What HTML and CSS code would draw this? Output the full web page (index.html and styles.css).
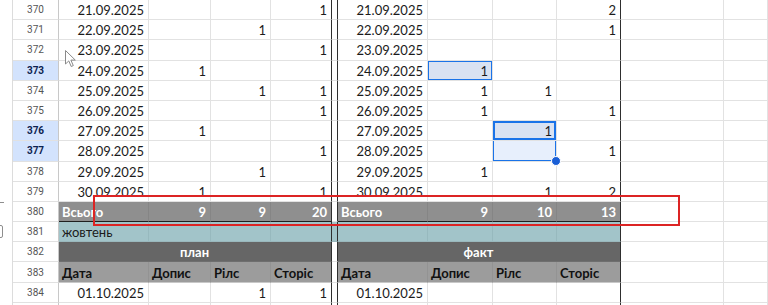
FILE: index.html
```html
<!DOCTYPE html>
<html lang="uk">
<head>
<meta charset="utf-8">
<title>Sheet</title>
<link rel="stylesheet" href="styles.css">
</head>
<body>
<div class="sheet">
  <div class="row">
    <div class="strip"></div><div class="rh">370</div>
    <div class="c wa">21.09.2025</div><div class="c wb"></div><div class="c wc"></div><div class="c wd dk">1</div>
    <div class="gap"></div>
    <div class="c we">21.09.2025</div><div class="c wf"></div><div class="c wg"></div><div class="c wh dk">2</div>
    <div class="c wi"></div><div class="c wj"></div>
  </div>
  <div class="row">
    <div class="strip"></div><div class="rh">371</div>
    <div class="c wa">22.09.2025</div><div class="c wb"></div><div class="c wc">1</div><div class="c wd dk"></div>
    <div class="gap"></div>
    <div class="c we">22.09.2025</div><div class="c wf"></div><div class="c wg"></div><div class="c wh dk">1</div>
    <div class="c wi"></div><div class="c wj"></div>
  </div>
  <div class="row">
    <div class="strip"></div><div class="rh">372</div>
    <div class="c wa">23.09.2025</div><div class="c wb"></div><div class="c wc"></div><div class="c wd dk">1</div>
    <div class="gap"></div>
    <div class="c we">23.09.2025</div><div class="c wf"></div><div class="c wg"></div><div class="c wh dk"></div>
    <div class="c wi"></div><div class="c wj"></div>
  </div>
  <div class="row">
    <div class="strip"></div><div class="rh on">373</div>
    <div class="c wa">24.09.2025</div><div class="c wb">1</div><div class="c wc"></div><div class="c wd dk"></div>
    <div class="gap"></div>
    <div class="c we">24.09.2025</div><div class="c wf sel">1</div><div class="c wg"></div><div class="c wh dk"></div>
    <div class="c wi"></div><div class="c wj"></div>
  </div>
  <div class="row">
    <div class="strip"></div><div class="rh">374</div>
    <div class="c wa">25.09.2025</div><div class="c wb"></div><div class="c wc">1</div><div class="c wd dk">1</div>
    <div class="gap"></div>
    <div class="c we">25.09.2025</div><div class="c wf">1</div><div class="c wg">1</div><div class="c wh dk"></div>
    <div class="c wi"></div><div class="c wj"></div>
  </div>
  <div class="row">
    <div class="strip"></div><div class="rh">375</div>
    <div class="c wa">26.09.2025</div><div class="c wb"></div><div class="c wc"></div><div class="c wd dk">1</div>
    <div class="gap"></div>
    <div class="c we">26.09.2025</div><div class="c wf">1</div><div class="c wg"></div><div class="c wh dk">1</div>
    <div class="c wi"></div><div class="c wj"></div>
  </div>
  <div class="row">
    <div class="strip"></div><div class="rh on">376</div>
    <div class="c wa">27.09.2025</div><div class="c wb">1</div><div class="c wc"></div><div class="c wd dk"></div>
    <div class="gap"></div>
    <div class="c we">27.09.2025</div><div class="c wf"></div><div class="c wg active">1</div><div class="c wh dk"></div>
    <div class="c wi"></div><div class="c wj"></div>
  </div>
  <div class="row">
    <div class="strip"></div><div class="rh on">377</div>
    <div class="c wa">28.09.2025</div><div class="c wb"></div><div class="c wc"></div><div class="c wd dk">1</div>
    <div class="gap"></div>
    <div class="c we">28.09.2025</div><div class="c wf"></div><div class="c wg range"></div><div class="c wh dk">1</div>
    <div class="c wi"></div><div class="c wj"></div>
  </div>
  <div class="row">
    <div class="strip"></div><div class="rh">378</div>
    <div class="c wa">29.09.2025</div><div class="c wb"></div><div class="c wc">1</div><div class="c wd dk"></div>
    <div class="gap"></div>
    <div class="c we">29.09.2025</div><div class="c wf">1</div><div class="c wg"></div><div class="c wh dk"></div>
    <div class="c wi"></div><div class="c wj"></div>
  </div>
  <div class="row">
    <div class="strip"></div><div class="rh">379</div>
    <div class="c wa">30.09.2025</div><div class="c wb">1</div><div class="c wc"></div><div class="c wd dk">1</div>
    <div class="gap"></div>
    <div class="c we">30.09.2025</div><div class="c wf"></div><div class="c wg">1</div><div class="c wh dk">2</div>
    <div class="c wi"></div><div class="c wj"></div>
  </div>
  <div class="row">
    <div class="strip"><div class="dash"></div></div><div class="rh">380</div>
    <div class="c wa tot left">Всього</div><div class="c wb tot">9</div><div class="c wc tot">9</div><div class="c wd tot dk">20</div>
    <div class="gap"></div>
    <div class="c we tot left">Всього</div><div class="c wf tot">9</div><div class="c wg tot">10</div><div class="c wh tot dk">13</div>
    <div class="c wi"></div><div class="c wj"></div>
  </div>
  <div class="row">
    <div class="strip"><div class="grp"></div></div><div class="rh">381</div>
    <div class="c wa teal left">жовтень</div><div class="c wb teal"></div><div class="c wc teal"></div><div class="c wd teal dk"></div>
    <div class="gap teal"></div>
    <div class="c we teal"></div><div class="c wf teal"></div><div class="c wg teal"></div><div class="c wh teal dk"></div>
    <div class="c wi"></div><div class="c wj"></div>
  </div>
  <div class="row">
    <div class="strip"></div><div class="rh">382</div>
    <div class="c wleft title dk">план</div>
    <div class="gap"></div>
    <div class="c wright title dk">факт</div>
    <div class="c wi"></div><div class="c wj"></div>
  </div>
  <div class="row">
    <div class="strip"></div><div class="rh">383</div>
    <div class="c wa head">Дата</div><div class="c wb head">Допис</div><div class="c wc head">Рілс</div><div class="c wd head dk">Сторіс</div>
    <div class="gap"></div>
    <div class="c we head">Дата</div><div class="c wf head">Допис</div><div class="c wg head">Рілс</div><div class="c wh head dk">Сторіс</div>
    <div class="c wi"></div><div class="c wj"></div>
  </div>
  <div class="row">
    <div class="strip"></div><div class="rh">384</div>
    <div class="c wa">01.10.2025</div><div class="c wb"></div><div class="c wc">1</div><div class="c wd dk">1</div>
    <div class="gap"></div>
    <div class="c we">01.10.2025</div><div class="c wf"></div><div class="c wg"></div><div class="c wh dk"></div>
    <div class="c wi"></div><div class="c wj"></div>
  </div>
  <div class="row">
    <div class="strip"></div><div class="rh"></div>
    <div class="c wa"></div><div class="c wb"></div><div class="c wc"></div><div class="c wd dk"></div>
    <div class="gap"></div>
    <div class="c we"></div><div class="c wf"></div><div class="c wg"></div><div class="c wh dk"></div>
    <div class="c wi"></div><div class="c wj"></div>
  </div>
</div>
<div class="mark"></div>
<svg class="cursor" width="12" height="18" viewBox="0 0 12 18"><path d="M0.5 0.5 L0.5 14 L3.8 10.9 L6.2 16.5 L8.3 15.6 L5.9 10.1 L10.3 10.1 Z" fill="#ffffff" stroke="#8a8a8a" stroke-width="1" stroke-linejoin="round"/></svg>
</body>
</html>
```
FILE: styles.css
```css
html, body {
  margin: 0;
  padding: 0;
  background: #ffffff;
  overflow: hidden;
}
body {
  width: 768px;
  height: 305px;
  position: relative;
  font-family: Lato, "Open Sans", sans-serif;
  font-size: 13px;
  color: #1b1b1b;
}
.sheet {
  display: flex;
  flex-direction: column;
}
.row {
  display: flex;
  height: 20.2px;
  flex: none;
}
.strip {
  width: 13px;
  flex: none;
  border-right: 1px solid #dcdcdc;
  box-sizing: border-box;
  display: flex;
  flex-direction: column;
  overflow: visible;
}
.dash {
  width: 4px;
  height: 1px;
  background: #8e8e8e;
  margin-top: 0;
}
.grp {
  width: 11px;
  height: 13px;
  margin-left: -8px;
  margin-top: 3px;
  border: 1px solid #8e8e8e;
  border-radius: 2px;
  box-sizing: border-box;
}
.rh {
  width: 46px;
  flex: none;
  box-sizing: border-box;
  border-right: 1px solid #c8c8c8;
  border-bottom: 1px solid #e1e1e1;
  display: flex;
  align-items: center;
  justify-content: center;
  font-family: Roboto, "Liberation Sans", sans-serif;
  font-size: 10px;
  color: #555555;
}
.rh.on {
  background: #d3e3fd;
  color: #0b2250;
  font-weight: bold;
}
.c {
  flex: none;
  box-sizing: border-box;
  border-right: 1px solid #e2e2e2;
  border-bottom: 1px solid #e2e2e2;
  display: flex;
  align-items: center;
  justify-content: flex-end;
  padding: 1px 4px 0 3px;
  white-space: nowrap;
  overflow: hidden;
  position: relative;
}
.wa, .we { width: 90px; }
.wb { width: 62px; }
.wc { width: 60px; }
.wd { width: 61px; }
.wf { width: 65px; }
.wg, .wh { width: 64px; }
.wi { width: 103px; }
.wj { flex: 1; }
.wleft { width: 273px; }
.wright { width: 283px; }
.gap {
  width: 6px;
  flex: none;
  box-sizing: border-box;
  border-right: 1px solid #2e2e2e;
  border-bottom: 1px solid #e2e2e2;
}
.c.dk { border-right-color: #2e2e2e; }
.left { justify-content: flex-start; }
.tot {
  background: #8f8f8f;
  color: #ffffff;
  font-weight: bold;
  border-right-color: #858585;
  border-bottom-color: #1f1f1f;
}
.teal {
  background: #a2c4c9;
  border-right-color: #97b9be;
  border-bottom-color: #9ab8bd;
}
.gap.teal { border-right-color: #2e2e2e; }
.title {
  background: #666666;
  color: #ffffff;
  font-weight: bold;
  justify-content: center;
  border-bottom-color: #6f6f6f;
}
.head {
  background: #9c9c9c;
  color: #111111;
  font-weight: bold;
  justify-content: flex-start;
  border-right-color: #939393;
  border-bottom-color: #c8c8c8;
}
.sel {
  background: #d9e2f2;
  box-shadow: inset 0 0 0 1px #1a73e8;
}
.active {
  background: #d9e2f2;
  box-shadow: inset 0 0 0 2px #1a73e8;
}
.range {
  background: #e7effc;
  overflow: visible;
  box-shadow: inset 1px 0 0 #1a73e8, inset -1px 0 0 #1a73e8, inset 0 -1px 0 #1a73e8;
}
.range::after {
  content: "";
  position: absolute;
  right: -5px;
  bottom: -5px;
  width: 8px;
  height: 8px;
  border-radius: 50%;
  background: #1a5fd6;
  border: 1px solid #ffffff;
  z-index: 2;
}
.mark {
  position: absolute;
  left: 93px;
  top: 195px;
  width: 587px;
  height: 31px;
  box-sizing: border-box;
  border: 2px solid #dc2424;
  z-index: 3;
}
.cursor {
  position: absolute;
  left: 65px;
  top: 50px;
  z-index: 4;
}
```
